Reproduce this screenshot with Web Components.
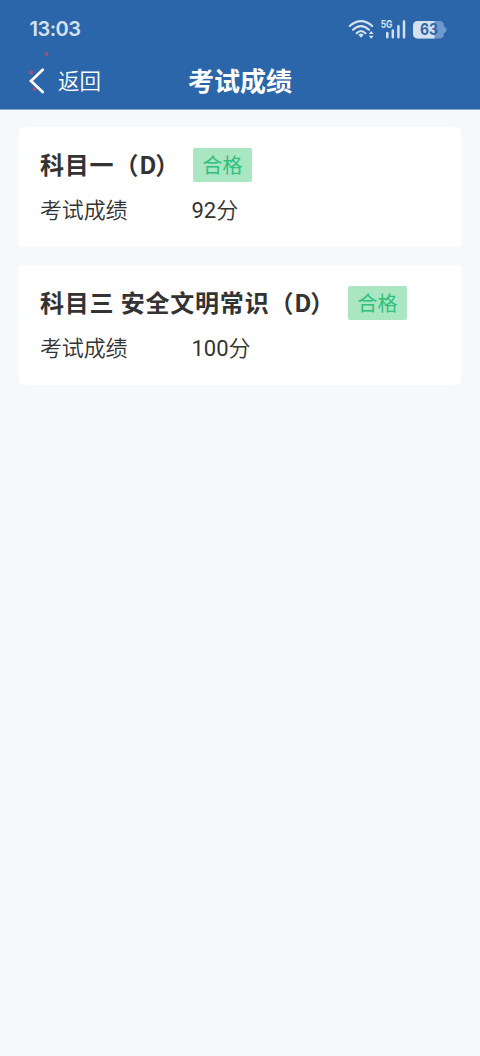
<!DOCTYPE html>
<html lang="zh-CN">
<head>
<meta charset="utf-8">
<title>考试成绩</title>
<style>
html,body{margin:0;height:100%;background:#f5f9fb}
body{font-family:Roboto,"Noto Sans CJK SC",sans-serif;color:#333}
</style>
</head>
<body>
<score-page></score-page>
<script>
const define = (name, html) => customElements.define(name, class extends HTMLElement {
  constructor() {
    super();
    const t = document.createElement('template');
    t.innerHTML = html;
    this.attachShadow({mode: 'open'}).append(t.content.cloneNode(true));
  }
});

define('status-bar', `<style>
:host{display:flex;align-items:center;justify-content:space-between;height:57px;box-sizing:border-box;padding:0 33px 0 29.5px;color:#d6e1f0}
.time{font:600 20px/24px Inter,sans-serif;letter-spacing:-.5px}
svg{display:block;width:100px;height:24px}
text{font-family:Inter,sans-serif;font-weight:700}
</style>
<span class="time">13:03</span>
<svg viewBox="347 16 100 24" fill="none" stroke="currentColor">
  <g stroke-width="2.1" stroke-linecap="round">
    <path d="M349.8 25Q361 15.4 372.2 25"/>
    <path d="M353 28.7Q361 21.5 369 28.7"/>
    <path d="M356.6 32.2Q361 27.8 365.4 32.2"/>
  </g>
  <path fill="currentColor" stroke="none" d="M358.4 33.7Q361 31.4 363.6 33.7L361 36.8ZM368.8 33.1L371.2 30L373.6 33.1ZM368.8 34.7L371.2 37.7L373.6 34.7Z"/>
  <text x="380.7" y="27" font-size="10.8" textLength="11.8" lengthAdjust="spacingAndGlyphs" fill="currentColor" stroke="none">5G</text>
  <path stroke-width="2.5" stroke-linecap="round" d="M387.3 32V36.2M392.8 29.5V36.2M398.4 25.2V36.2M404 20.6V36.2"/>
  <g stroke="none">
    <path fill="#6f98cb" d="M418 20H439Q444 20 444 25V32.5Q444 37.5 439 37.5H418ZM443.5 25.4Q446.6 26.2 446.6 28.8Q446.6 31.4 443.5 32.2Z"/>
    <path fill="#d6e1f0" d="M434.5 20H418Q413 20 413 25V32.5Q413 37.5 418 37.5H434.5Z"/>
    <text x="420" y="34.3" font-size="15.5" textLength="18" lengthAdjust="spacingAndGlyphs" fill="#2c66aa">63</text>
  </g>
</svg>`);

define('nav-bar', `<style>
:host{display:grid;grid-template-columns:1fr auto 1fr;align-items:center;height:52px;box-sizing:border-box;padding:0 29px 4px;color:#fff}
.back{display:flex;align-items:center;gap:14px;font-size:21.5px;line-height:30px}
slot[name=back]{display:block;padding-top:2px;font-weight:350}
svg{width:15px;height:26px;overflow:visible}
h1{margin:0;padding-bottom:2px;font:700 26px/36px "Noto Sans CJK SC",sans-serif}
</style>
<div class="back"><svg viewBox="29 68 15 26" fill="none">
<g fill="#a94f6e"><circle cx="46.5" cy="54" r="2"/><circle cx="31" cy="72.5" r="2"/><circle cx="34.5" cy="89" r="2"/></g>
<path d="M42.7 69.8L31 81L42.7 92" stroke="#fff" stroke-width="2.7" stroke-linecap="round"/></svg><slot name="back"></slot></div>
<h1><slot></slot></h1>`);

define('result-badge', `<style>
:host{display:block;width:59px;height:34px;border-radius:2px;background:#a9e6c1;color:#2fbf7f;text-align:center;font:400 20px/33px "Noto Sans CJK SC",sans-serif}
</style><slot></slot>`);

define('score-card', `<style>
:host{display:block;box-sizing:border-box;height:120px;padding:21px;background:#fff;border-radius:4px}
.head{display:flex;height:34px;align-items:center}
h2{margin:0;padding-bottom:2px;white-space:pre;font:700 24px/34px "Noto Sans CJK SC",sans-serif;letter-spacing:.8px}
.row{display:grid;grid-template-columns:151.5px 1fr;margin-top:13px;font-size:22px;line-height:32px}
.row span{letter-spacing:-.15px;font-weight:350}
</style>
<div class="head"><h2><slot name="subject"></slot></h2><slot name="badge"></slot></div>
<div class="row"><span>考试成绩</span><slot></slot></div>`);

define('score-page', `<style>
:host{display:block;min-height:1056px;background:#f5f9fb}
header{background:#2c66aa;height:109px;border-bottom:1px solid #86a8cf}
main{display:flex;flex-direction:column;gap:18px;padding:17px 19px}
.a{margin-left:13px}
i{font-style:normal;letter-spacing:-1.2px}
b{font-weight:350}
</style>
<header><status-bar></status-bar><nav-bar><span slot="back">返回</span>考试成绩</nav-bar></header>
<main>
<score-card><span slot="subject">科目一（<i>D</i>）</span><result-badge class="a" slot="badge">合格</result-badge><span>92<b>分</b></span></score-card>
<score-card><span slot="subject">科目三 安全文明常识（<i>D</i>）</span><result-badge class="a" slot="badge">合格</result-badge><span>100<b>分</b></span></score-card>
</main>`);
</script>
</body>
</html>
